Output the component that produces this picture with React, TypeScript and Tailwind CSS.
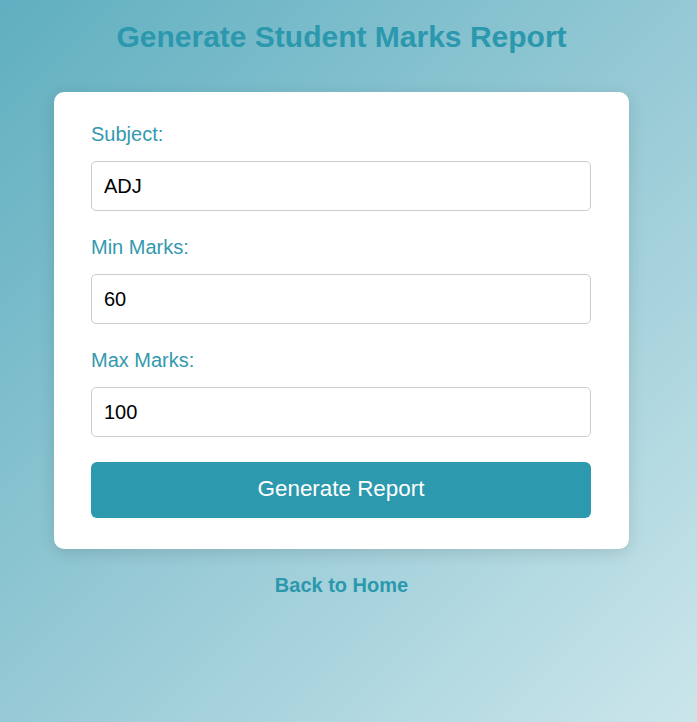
import React from "react";

export default function App() {
  const font = { fontFamily: '"Liberation Sans", Arial, sans-serif' };
  return (
    <div
      className="min-h-screen w-full bg-[linear-gradient(135deg,#60afc0_0%,#95c9d5_50%,#cbe6eb_100%)] pr-[14px]"
      style={font}
    >
      <div className="flex flex-col items-center pt-[20px]">
        <h1 className="text-[30px] leading-[34px] font-bold text-[#2b98ad] mb-[38px]">
          Generate Student Marks Report
        </h1>
        <div className="w-[575px] bg-white rounded-[10px] shadow-[0_4px_16px_rgba(0,0,0,0.12)] pt-[30px] pb-[31px] pl-[37px] pr-[38px]">
          <label className="block text-[20px] leading-[24px] text-[#3399ae] mb-[15px]">Subject:</label>
          <input
            defaultValue="ADJ"
            className="block w-full h-[50px] border border-[#cccccc] rounded-[5px] px-[12px] text-[20px] text-black mb-[24px] outline-none"
          />
          <label className="block text-[20px] leading-[24px] text-[#3399ae] mb-[15px]">Min Marks:</label>
          <input
            defaultValue="60"
            className="block w-full h-[50px] border border-[#cccccc] rounded-[5px] px-[12px] text-[20px] text-black mb-[24px] outline-none"
          />
          <label className="block text-[20px] leading-[24px] text-[#3399ae] mb-[15px]">Max Marks:</label>
          <input
            defaultValue="100"
            className="block w-full h-[50px] border border-[#cccccc] rounded-[5px] px-[12px] text-[20px] text-black mb-[25px] outline-none"
          />
          <button className="block w-full h-[56px] rounded-[6px] bg-[#2c99ae] text-white text-[22.4px] leading-[24px] pb-[2px]">
            Generate Report
          </button>
        </div>
        <a className="mt-[25px] text-[20px] leading-[23px] font-bold text-[#2b98ad]">Back to Home</a>
      </div>
    </div>
  );
}
